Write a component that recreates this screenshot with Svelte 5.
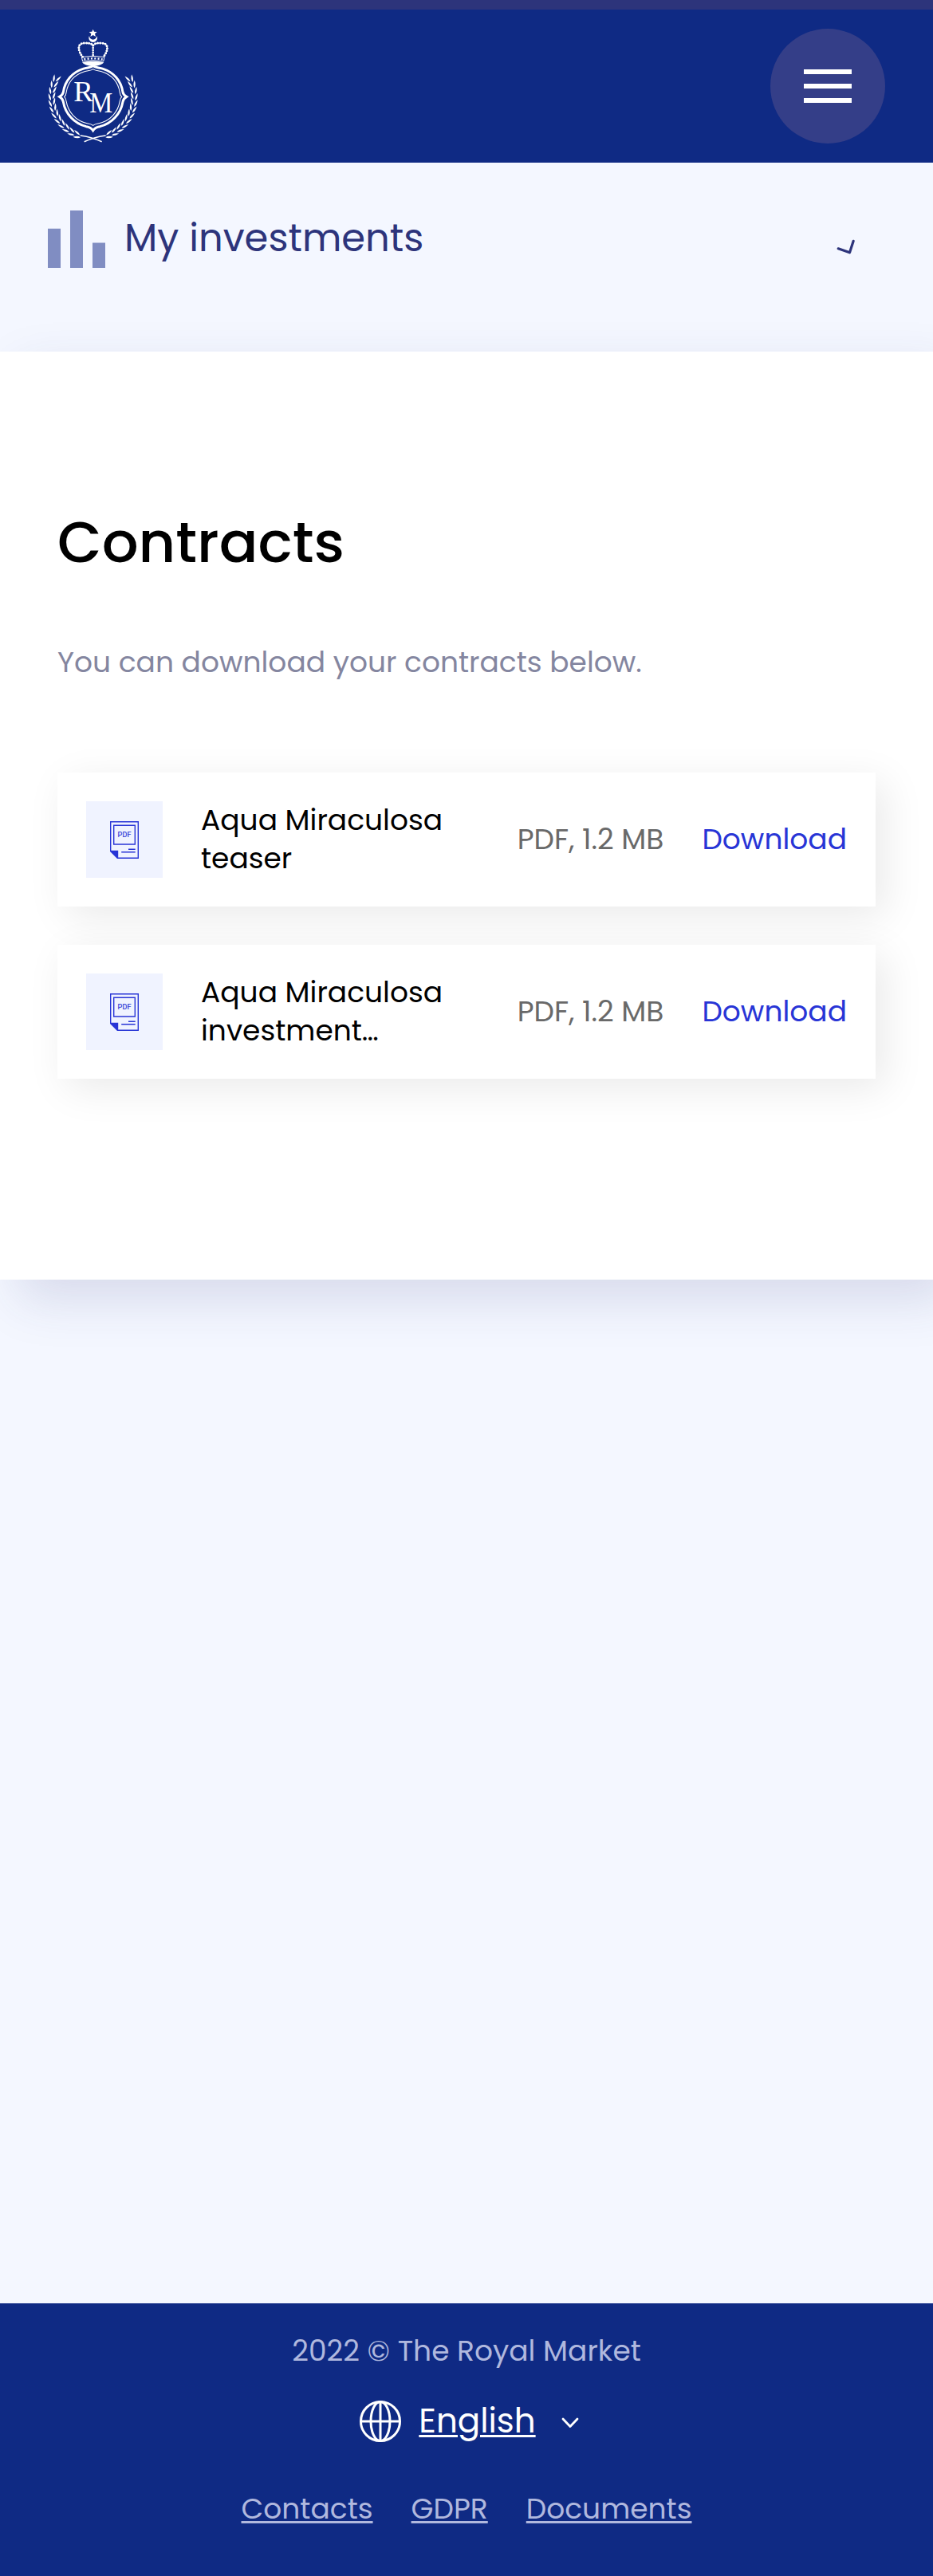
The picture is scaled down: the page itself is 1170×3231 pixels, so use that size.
<script>
  const contracts = [
    { first: 'Aqua Miraculosa', second: 'teaser', meta: 'PDF, 1.2 MB' },
    { first: 'Aqua Miraculosa', second: 'investment…', meta: 'PDF, 1.2 MB' }
  ];

  // Laurel leaves follow an arc around the monogram ring.
  const leaves = [];
  for (let i = 0; i < 12; i++) {
    const a = 112 + i * 8.5;
    for (const side of [1, -1]) {
      const angle = a + (side < 0 ? 2 : 0);
      const r = 155 + side * 8;
      const rad = (angle * Math.PI) / 180;
      leaves.push({
        x: (230 + r * Math.cos(rad)).toFixed(1),
        y: (302 + r * Math.sin(rad)).toFixed(1),
        rot: (angle + 90 - side * 18).toFixed(1)
      });
    }
  }
</script>

<div class="page">
  <header class="header">
    <svg class="crest" viewBox="60 45 342 432" fill="none" stroke="#fff">
      <path d="M230 47l4 9 11 1-8 7 3 11-10-6-10 6 3-11-8-7 11-1z" fill="#fff" stroke="none" />
      <path d="M216 72a16 16 0 1 0 28 0a13.500 13.500 0 1 1-28 0z" fill="#fff" stroke="none" />
      <path d="M191 151C174 130 168 101 196 99C212 98 224 100 230 108C236 100 248 98 264 99C292 101 286 130 269 151" stroke-width="9" stroke-linecap="round" stroke-dasharray="0 9.500" />
      <path d="M191 151C174 130 168 101 196 99C212 98 224 100 230 108C236 100 248 98 264 99C292 101 286 130 269 151M230 108V152" stroke-width="3" />
      <path d="M230 108V152" stroke-width="8" stroke-linecap="round" stroke-dasharray="0 9" />
      <path d="M187 152Q230 144 273 152L269 168Q230 160 191 168Z" stroke-width="3" />
      <path d="M196 160Q230 154 266 160" stroke-width="7" stroke-dasharray="6 7" />
      <path d="M189 172Q230 162 271 172Q262 184 230 186Q198 184 189 172Z" fill="#fff" stroke="none" />
      <path d="M230 185C240 193 252 190 268 196C306 208 336 240 342 284C344 293 349 297 356 301C349 305 344 310 342 320C334 366 300 402 256 413C244 415 236 418 230 428C224 418 216 415 204 413C160 402 126 366 118 320C116 310 111 305 104 301C111 297 116 293 118 284C124 240 154 208 192 196C208 190 220 193 230 185Z" stroke-width="9" />
      <path d="M230 197C238 204 250 202 262 206C300 218 325 246 331 286C332 294 334 298 338 301C334 305 332 309 331 317C324 358 296 392 252 401C242 403 236 404 230 409C224 404 218 403 208 401C164 392 136 358 129 317C128 309 126 305 122 301C126 298 128 294 129 286C135 246 160 218 198 206C210 202 222 204 230 197Z" stroke-width="3.200" />
      <g fill="#fff" stroke="none" font-family="Liberation Serif, serif">
        <text x="157" y="317" font-size="109" textLength="74" lengthAdjust="spacingAndGlyphs">R</text>
        <text x="217" y="359" font-size="108" textLength="87" lengthAdjust="spacingAndGlyphs">M</text>
      </g>
      {#each [false, true] as flip}
        <g transform={flip ? 'translate(460 0) scale(-1 1)' : undefined}>
          {#each leaves as leaf}
            <path d="M-14 0Q-3 -7 15 0Q-3 7 -14 0Z" fill="#fff" stroke="none" transform="translate({leaf.x} {leaf.y}) rotate({leaf.rot})" />
          {/each}
          <path d="M182 447Q222 452 263 470" stroke-width="5" />
        </g>
      {/each}
    </svg>
    <button class="menu" aria-label="Menu"><span></span><span></span><span></span></button>
  </header>

  <nav class="section-nav">
    <svg class="bars" viewBox="0 0 72 72" fill="#808dc2">
      <path d="M0 22.700H16V72H0zM28 0H44V72H28zM56 40.500H72V72H56z" />
    </svg>
    <span class="nav-title">My investments</span>
    <svg class="tick" viewBox="0 0 24 20" fill="none" stroke="#2d347b" stroke-width="3.200" stroke-linecap="round" stroke-linejoin="round">
      <path d="M2.200 11.800L16.500 16.800L21.200 2.300" />
    </svg>
  </nav>

  <main class="panel">
    <h1>Contracts</h1>
    <p class="lead">You can download your contracts below.</p>
    <div class="list">
      {#each contracts as c}
        <article class="card">
          <div class="tile">
            <svg viewBox="0 0 36 47" fill="none" stroke="#2835d6" stroke-width="1.400">
              <path d="M.7 .7H35.300V46.300H9.500L.7 37.500Z" />
              <path d="M.7 37.500H9.500V46.300Z" fill="#2835d6" />
              <path d="M4.700 5.200H31.300V29H4.700Z" />
              <path d="M23 35.300H31.700M14.200 38.700H31.700" />
              <text x="18" y="20.300" fill="#2835d6" stroke="#2835d6" stroke-width=".2" font-family="Roboto, sans-serif" font-size="9" text-anchor="middle" textLength="17">PDF</text>
            </svg>
          </div>
          <div class="name"><span>{c.first}</span><span>{c.second}</span></div>
          <span class="meta">{c.meta}</span>
          <a class="download" href="#download">Download</a>
        </article>
      {/each}
    </div>
  </main>

  <footer class="footer">
    <div>2022 © The Royal Market</div>
    <div class="lang">
      <svg class="globe" viewBox="0 0 54 54" fill="none" stroke="#fff" stroke-width="3">
        <circle cx="27" cy="27" r="24.500" />
        <ellipse cx="27" cy="27" rx="12" ry="24.500" />
        <path d="M27 2.500V51.500M2.500 27H51.500" />
      </svg>
      <a href="#language">English</a>
      <svg class="chevron" viewBox="0 0 22 14" fill="none" stroke="#fff" stroke-width="2.800" stroke-linecap="round" stroke-linejoin="round">
        <path d="M2 2L11 11.500L20 2" />
      </svg>
    </div>
    <div class="links">
      <a href="#contacts">Contacts</a>
      <a href="#gdpr">GDPR</a>
      <a href="#documents">Documents</a>
    </div>
  </footer>
</div>

<style>
  :global(body) { margin: 0; }
  .page {
    display: flex;
    flex-direction: column;
    min-height: 3231px;
    background: #f4f7ff;
    overflow: hidden;
    font-family: Poppins, Inter, sans-serif;
    font-size: 36px;
    line-height: 48px;
  }
  .header {
    box-sizing: border-box;
    height: 204px;
    padding: 24px 60px;
    border-top: 12px solid #2d347b;
    background: #0f2a84;
    display: flex;
    justify-content: space-between;
    align-items: flex-start;
  }
  .crest { width: 114px; height: 144px; }
  .menu {
    width: 144px;
    height: 144px;
    padding: 0;
    border: 0;
    border-radius: 50%;
    background: #343e88;
    display: flex;
    flex-direction: column;
    align-items: center;
    justify-content: center;
    gap: 12px;
  }
  .menu span { width: 60px; height: 6px; background: #fff; }
  .section-nav {
    box-sizing: border-box;
    height: 237px;
    padding: 60px 97px 0 60px;
    display: flex;
    align-items: flex-start;
  }
  .bars { width: 72px; height: 72px; margin-right: 24px; }
  .nav-title { flex: 1; font-size: 48px; line-height: 70px; color: #2d347b; }
  .tick { width: 24px; height: 20px; margin-top: 36px; }
  .panel {
    box-sizing: border-box;
    height: 1164px;
    padding: 185px 72px 0;
    background: #fff;
    box-shadow: 24px 24px 60px rgba(45, 52, 123, .15);
  }
  h1 { margin: 0; font-size: 72px; line-height: 108px; font-weight: 500; color: #000; }
  .lead { margin: 70px 0 111px; line-height: 54px; color: #8486a0; }
  .list { display: flex; flex-direction: column; gap: 48px; }
  .card {
    display: flex;
    align-items: center;
    padding: 36px;
    background: #fff;
    box-shadow: 12px 12px 48px rgba(0, 0, 0, .085);
  }
  .tile {
    width: 96px;
    height: 96px;
    margin-right: 48px;
    background: #f0f3ff;
    display: flex;
    align-items: center;
    justify-content: center;
  }
  .tile svg { width: 36px; height: 47px; }
  .name { flex: 1; display: flex; flex-direction: column; align-items: flex-start; color: #000; }
  .meta { color: #696969; margin-right: 48px; }
  .download { color: #2835d6; text-decoration: none; }
  .footer {
    box-sizing: border-box;
    height: 342px;
    margin-top: auto;
    padding-top: 33px;
    background: #0f2a84;
    color: #b0b8de;
    display: flex;
    flex-direction: column;
    align-items: center;
    line-height: 54px;
  }
  .footer a { color: inherit; text-decoration: underline; text-decoration-thickness: 3px; text-underline-offset: 3px; }
  .lang { display: flex; align-items: center; margin: 29px 0 52px 6px; line-height: 63px; font-size: 42px; color: #fff; }
  .globe { width: 54px; height: 54px; margin-right: 21px; }
  .chevron { width: 22px; height: 14px; margin: 4px 0 0 32px; }
  .links { display: flex; gap: 48px; }
</style>
